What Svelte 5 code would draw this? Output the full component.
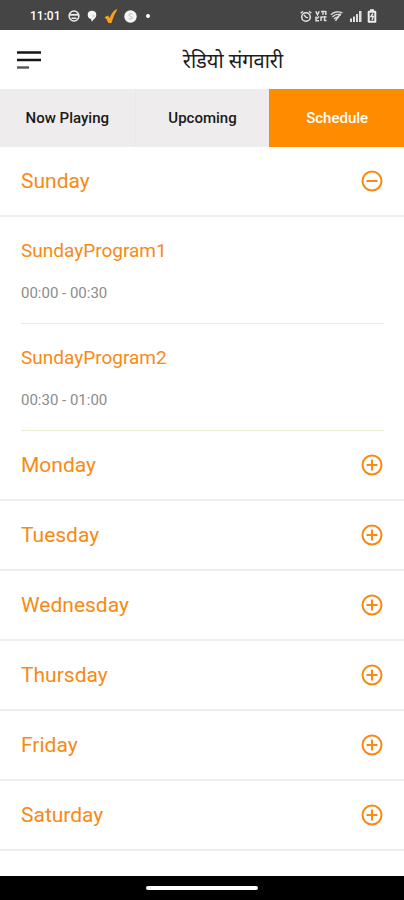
<script>
  const tabs = ['Now Playing', 'Upcoming', 'Schedule'];
  const days = [
    {
      name: 'Sunday',
      programs: [
        { title: 'SundayProgram1', time: '00:00 - 00:30' },
        { title: 'SundayProgram2', time: '00:30 - 01:00' }
      ]
    },
    { name: 'Monday', programs: [] },
    { name: 'Tuesday', programs: [] },
    { name: 'Wednesday', programs: [] },
    { name: 'Thursday', programs: [] },
    { name: 'Friday', programs: [] },
    { name: 'Saturday', programs: [] }
  ];
  let active = $state('Schedule');
  let open = $state('Sunday');
</script>

<div class="screen">
  <div class="status">
    <div class="left">
      <span class="clock">11:01</span>
      <svg width="12" height="12" viewBox="0 0 12 12" aria-hidden="true">
        <circle cx="6" cy="6" r="4.9" fill="none" stroke="#eee" stroke-width="1.5" />
        <path d="M1.5 4.800h9" stroke="#eee" stroke-width="1.800" />
        <path d="M3.500 7.500h5v1.500h-5z" fill="#eee" />
      </svg>
      <svg width="12" height="12" viewBox="0 0 12 12" aria-hidden="true">
        <path d="M6 .7a4.3 4.3 0 0 1 4.3 4.2C10.300 8 7.500 9 5.800 11.800L5 9C3 8.600 1.700 7 1.700 4.900A4.300 4.300 0 0 1 6 .7z" fill="#f4f4f4" />
        <path d="M6.500 6h2" stroke="#aaa" />
      </svg>
      <svg width="14" height="15" viewBox="0 0 14 15" aria-hidden="true">
        <path d="M.5 8.200L4 6.400l1.800 2.500C7.300 5 9.200 2 12 .6h1.500C10.800 4.300 9 8.800 7.500 14H4.300C3.500 11.700 2.300 9.700.5 8.200z" fill="#f9a11b" />
      </svg>
      <svg width="13" height="13" viewBox="0 0 13 13" aria-hidden="true">
        <circle cx="6.500" cy="6.500" r="6.200" fill="#f4f4f4" />
        <path d="M8.500 4.300C7 3 4.800 3.800 5 5.200c.3 1.500 3.300.9 3.400 2.500C8.500 9.200 6 9.500 4.500 8.300" fill="none" stroke="#bbb" />
      </svg>
      <i class="dot"></i>
    </div>
    <div class="right">
      <svg width="12" height="13" viewBox="0 0 12 13" aria-hidden="true">
        <circle cx="6" cy="7" r="4.300" fill="none" stroke="#e6e6e6" stroke-width="1.500" />
        <path d="M.7 3.200L3 1.200M11.300 3.200L9 1.200M4 5l2.200 2.400L8 7.600" fill="none" stroke="#e6e6e6" stroke-width="1.300" />
      </svg>
      <svg width="12" height="12" viewBox="0 0 12 12" aria-hidden="true">
        <path d="M.8 1.200l1.700 3.600L4.200 1.200M6 1.500h4.500M8 1.500v3.300M10.800 1v4M1 6.500v4.300h3M4 6.500l-2 2M6 6.500v4.500M6 7h2.500M9.500 6v5M9.500 7h2M9.500 10.500h2" fill="none" stroke="#ddd" stroke-width="1.500" />
      </svg>
      <svg width="13" height="12" viewBox="0 0 13 12" aria-hidden="true">
        <path d="M1 4.800C3.500 1.500 9 1.200 12.500 3M2.500 7C5 4 8 3.800 11 5.200M4.200 9C5.700 7 7.500 6.800 9 7.500M5.500 10.800L10.500 3.500" fill="none" stroke="#ddd" stroke-width="1.400" />
      </svg>
      <svg class="signal" width="13" height="12" viewBox="0 0 13 12" aria-hidden="true">
        <path d="M1 8.500h2V12H1zM4 6.500h2V12H4zM7 4h2v8H7zM10 1h2.500v11H10z" fill="#ddd" />
      </svg>
      <svg class="battery" width="10" height="14" viewBox="0 0 10 14" aria-hidden="true">
        <path d="M3 1.200h4M1.700 2.800h6.600v10H1.700z" fill="none" stroke="#eee" stroke-width="2" stroke-linejoin="round" />
        <path d="M6 4.500L3.800 7.500h2.500L5 11" fill="none" stroke="#eee" stroke-width="1.300" />
      </svg>
    </div>
  </div>

  <header>
    <button class="menu" aria-label="Menu">
      <svg width="24" height="20" viewBox="0 0 24 20">
        <path d="M0 2.500h24M0 10h24" stroke="#161616" stroke-width="2.400" />
        <path d="M0 17.500h12" stroke="#555" stroke-width="2.400" />
      </svg>
    </button>
    <h1 lang="hi">रेडियो संगवारी</h1>
  </header>

  <nav>
    {#each tabs as tab}
      <button class:active={active === tab} onclick={() => (active = tab)}>{tab}</button>
    {/each}
  </nav>

  <main>
    {#each days as day}
      <section>
        <button
          class="day"
          aria-expanded={open === day.name}
          onclick={() => (open = open === day.name ? '' : day.name)}
        >
          <span>{day.name}</span>
          <svg width="24" height="24" viewBox="0 0 24 24" fill="none" stroke="#f78a14" stroke-width="2" aria-hidden="true">
            <circle cx="12" cy="12" r="9.500" />
            <path d={open === day.name ? 'M6.500 12h11' : 'M6.500 12h11M12 6.500v11'} />
          </svg>
        </button>
        {#if open === day.name}
          {#each day.programs as program}
            <article>
              <h2>{program.title}</h2>
              <p>{program.time}</p>
            </article>
          {/each}
        {/if}
      </section>
    {/each}
  </main>

  <footer><i></i></footer>
</div>

<style>
  .screen {
    display: flex;
    flex-direction: column;
    min-height: 100vh;
    background: #fff;
    font-family: Roboto, 'Noto Sans', sans-serif;
  }
  button {
    margin: 0;
    padding: 0;
    border: 0;
    background: none;
    font: inherit;
    color: inherit;
    cursor: pointer;
  }
  svg {
    display: block;
    flex: none;
  }
  .status {
    display: flex;
    align-items: center;
    justify-content: space-between;
    box-sizing: border-box;
    height: 30px;
    padding: 2px 27px 0 30px;
    background: #454545;
    color: #fff;
  }
  .left,
  .right {
    display: flex;
    align-items: center;
  }
  .left {
    gap: 6px;
  }
  .right {
    gap: 3px;
  }
  .clock {
    margin-right: 2px;
    font-size: 12px;
    font-weight: 500;
    line-height: 16px;
  }
  .signal {
    margin-left: 3px;
  }
  .battery {
    margin-left: 2px;
  }
  .dot {
    width: 4px;
    height: 4px;
    margin-left: 3px;
    border-radius: 50%;
    background: #fff;
  }
  header {
    display: flex;
    align-items: center;
    height: 59px;
    padding: 0 17px;
  }
  .menu {
    width: 24px;
  }
  h1 {
    flex: 1;
    margin: 0;
    padding: 6px 0 0 38px;
    font-family: 'Noto Sans Devanagari', 'Lohit Devanagari', 'Noto Sans', sans-serif;
    font-size: 20px;
    font-weight: 400;
    line-height: 32px;
    text-align: center;
    color: #1c1c1c;
  }
  nav {
    display: grid;
    grid-template-columns: repeat(3, 1fr);
    height: 58px;
    background: #eeecec;
  }
  nav button {
    border-left: 1px solid #e9e8e8;
    font-size: 15px;
    font-weight: 500;
    color: #1a1a1a;
  }
  nav button:first-child {
    border-left: 0;
  }
  nav .active {
    border-left-color: #ff8c00;
    background: #ff8c00;
    color: #fff;
  }
  main {
    flex: 1;
  }
  .day {
    display: flex;
    align-items: center;
    justify-content: space-between;
    box-sizing: border-box;
    width: 100%;
    height: 70px;
    padding: 0 20px 0 21px;
    border-bottom: 2px solid #eee;
    font-size: 21px;
    line-height: 24px;
    color: #f78a14;
  }
  article {
    margin: 0 20px 0 21px;
    padding: 22px 0 20px;
    border-bottom: 1px solid #ebecd6;
  }
  h2 {
    margin: 0 0 20px;
    font-size: 19px;
    font-weight: 400;
    line-height: 24px;
    color: #f78a14;
  }
  p {
    margin: 0;
    font-size: 15px;
    line-height: 20px;
    color: #8c8c8c;
  }
  footer {
    display: flex;
    align-items: center;
    justify-content: center;
    height: 24px;
    background: #000;
  }
  footer i {
    width: 112px;
    height: 4px;
    border-radius: 2px;
    background: #fff;
  }
</style>
